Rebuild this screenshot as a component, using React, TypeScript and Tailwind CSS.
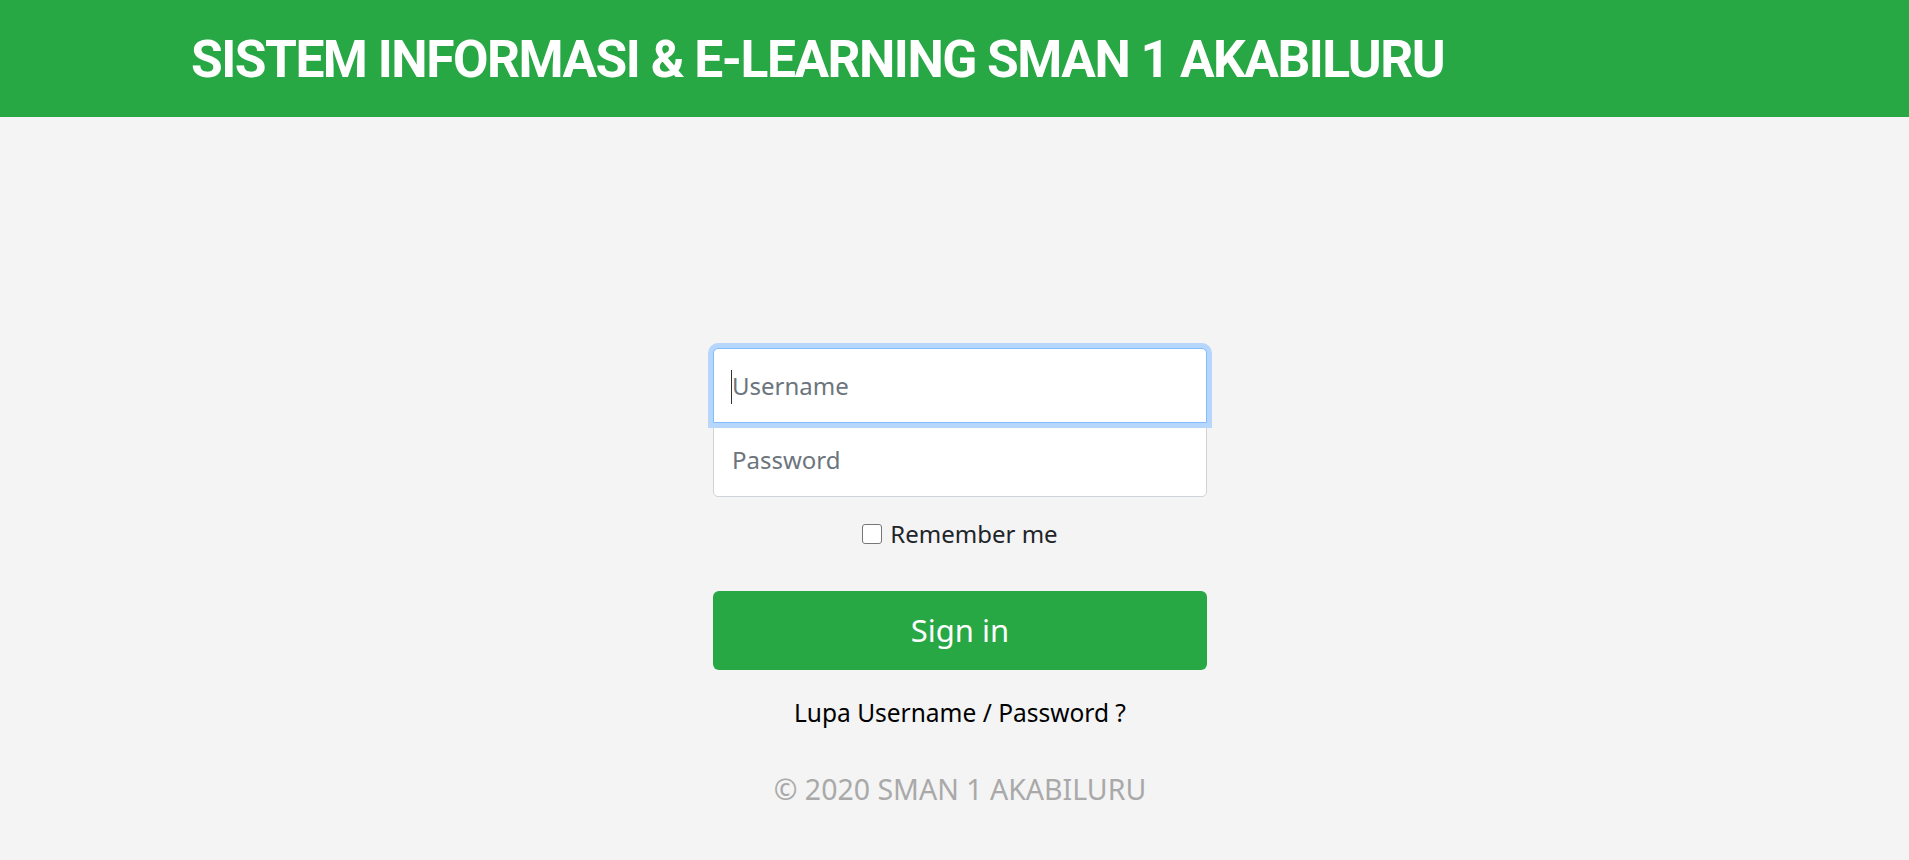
import React from "react";

export default function App() {
  return (
    <div className="min-h-[860px] bg-[#f4f4f4] font-['Noto_Sans',sans-serif]">
      <header className="flex h-[117px] items-center bg-[#28a745] pl-[191px]">
        <h1 className="pt-[2px] font-['Roboto',sans-serif] text-[51.5px] font-bold leading-none tracking-[-1.5px] text-white">
          SISTEM INFORMASI &amp; E-LEARNING SMAN 1 AKABILURU
        </h1>
      </header>

      <main className="flex flex-col items-center pl-[11px] pt-[231px]">
        <form className="flex w-[494px] flex-col items-center">
          <div className="relative z-10 w-full">
            <input
              autoFocus
              type="text"
              placeholder="Username"
              className="h-[75px] w-full rounded-t-[5px] border border-[#80bdff] bg-white px-[18px] text-[24px] text-[#495057] shadow-[0_0_0_5px_#b6d6fb] outline-none placeholder:text-[#6c757d]"
            />
            {/* text caret shown in the focused field */}
            <span className="pointer-events-none absolute left-[18px] top-[22px] h-[34px] w-px bg-[#333]" />
          </div>
          <input
            type="password"
            placeholder="Password"
            className="-mt-px h-[75px] w-full rounded-b-[5px] border border-[#ced4da] bg-white px-[18px] text-[24px] text-[#495057] outline-none placeholder:text-[#6c757d]"
          />

          <label className="mt-[19px] flex items-center gap-[8px] text-[24px] text-[#212529]">
            <span className="h-[20px] w-[20px] rounded-[3px] border border-[#767676] bg-white" />
            Remember me
          </label>

          <button
            type="button"
            className="mt-[39px] h-[79px] w-full rounded-[6px] bg-[#28a745] text-[31px] text-white"
          >
            Sign in
          </button>

          <a className="mt-[25px] text-[24.5px] text-black">Lupa Username / Password ?</a>

          <p className="mt-[36px] text-[28.5px] text-[#a9a9a9]">© 2020 SMAN 1 AKABILURU</p>
        </form>
      </main>
    </div>
  );
}
